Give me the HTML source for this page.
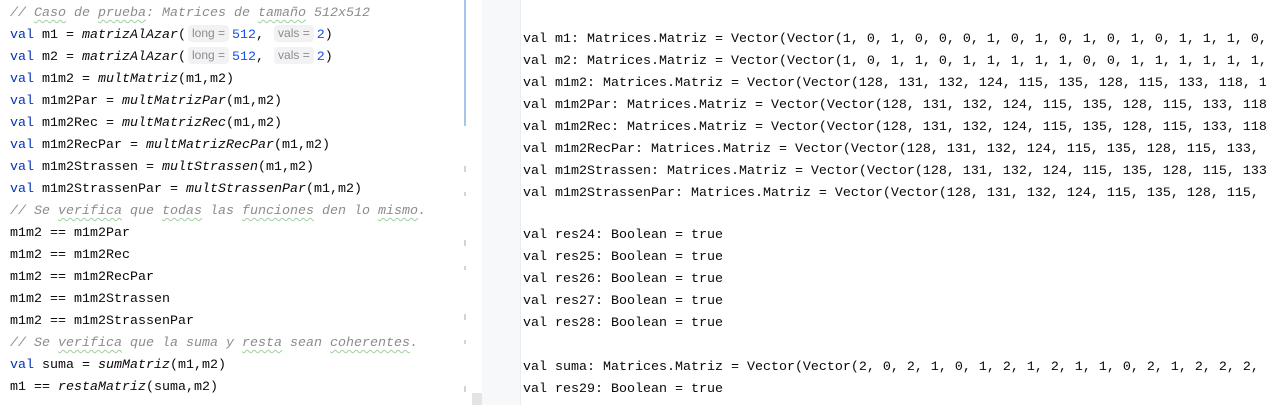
<!DOCTYPE html>
<html><head><meta charset="utf-8"><style>
body{margin:0;width:1266px;height:405px;overflow:hidden;background:#fff;font-family:"Liberation Mono",monospace;font-size:13.33px;color:#080808}
#left{position:absolute;left:0;top:0;width:482px;height:405px;background:#fff}
#gut{position:absolute;left:482px;top:0;width:38px;height:405px;background:#f7f8fa;border-right:1px solid #ebecf0}
#right{position:absolute;left:521px;top:0;width:745px;height:405px;background:#fff}
.l{position:absolute;white-space:pre;line-height:22px;height:22px}
.k{color:#0033b3}.f{font-style:italic}.n{color:#1750eb}.c{color:#8c8c8c;font-style:italic}
.h{display:inline-block;line-height:17px;font-family:"Liberation Sans",sans-serif;font-size:12px;color:#8c8c8c;background:#f2f2f4;border-radius:4px;padding:0 4px;margin:0 3px 0 2px;vertical-align:1px}
.w{text-decoration:underline wavy #9fcf9f;text-decoration-thickness:1px;text-underline-offset:3px}
.mk{position:absolute;left:464px;width:2px;height:6px;background:#d4d4d4}
</style></head><body>
<div id="left">
<div class="l" style="left:10px;top:3px"><span class="c">// <span class="w">Caso</span> de <span class="w">prueba</span>: Matrices de <span class="w">tamaño</span> 512x512</span></div>
<div class="l" style="left:10px;top:25px"><span class="k">val</span> m1 = <span class="f">matrizAlAzar</span>(<span class="h">long =</span><span class="n">512</span>, <span class="h">vals =</span><span class="n">2</span>)</div>
<div class="l" style="left:10px;top:47px"><span class="k">val</span> m2 = <span class="f">matrizAlAzar</span>(<span class="h">long =</span><span class="n">512</span>, <span class="h">vals =</span><span class="n">2</span>)</div>
<div class="l" style="left:10px;top:69px"><span class="k">val</span> m1m2 = <span class="f">multMatriz</span>(m1,m2)</div>
<div class="l" style="left:10px;top:91px"><span class="k">val</span> m1m2Par = <span class="f">multMatrizPar</span>(m1,m2)</div>
<div class="l" style="left:10px;top:113px"><span class="k">val</span> m1m2Rec = <span class="f">multMatrizRec</span>(m1,m2)</div>
<div class="l" style="left:10px;top:135px"><span class="k">val</span> m1m2RecPar = <span class="f">multMatrizRecPar</span>(m1,m2)</div>
<div class="l" style="left:10px;top:157px"><span class="k">val</span> m1m2Strassen = <span class="f">multStrassen</span>(m1,m2)</div>
<div class="l" style="left:10px;top:179px"><span class="k">val</span> m1m2StrassenPar = <span class="f">multStrassenPar</span>(m1,m2)</div>
<div class="l" style="left:10px;top:201px"><span class="c">// Se <span class="w">verifica</span> que <span class="w">todas</span> las <span class="w">funciones</span> den lo <span class="w">mismo</span>.</span></div>
<div class="l" style="left:10px;top:223px">m1m2 == m1m2Par</div>
<div class="l" style="left:10px;top:245px">m1m2 == m1m2Rec</div>
<div class="l" style="left:10px;top:267px">m1m2 == m1m2RecPar</div>
<div class="l" style="left:10px;top:289px">m1m2 == m1m2Strassen</div>
<div class="l" style="left:10px;top:311px">m1m2 == m1m2StrassenPar</div>
<div class="l" style="left:10px;top:333px"><span class="c">// Se <span class="w">verifica</span> que la suma y <span class="w">resta</span> sean <span class="w">coherentes</span>.</span></div>
<div class="l" style="left:10px;top:355px"><span class="k">val</span> suma = <span class="f">sumMatriz</span>(m1,m2)</div>
<div class="l" style="left:10px;top:377px">m1 == <span class="f">restaMatriz</span>(suma,m2)</div>
<div style="position:absolute;left:464px;top:0;width:2px;height:126px;background:#a9c4ec"></div>
<div class="mk" style="top:166px"></div><div class="mk" style="top:192px;height:4px"></div>
<div class="mk" style="top:240px"></div><div class="mk" style="top:266px;height:4px"></div>
<div class="mk" style="top:314px"></div><div class="mk" style="top:340px;height:4px"></div>
<div class="mk" style="top:386px"></div>
<div style="position:absolute;left:472px;top:393px;width:10px;height:12px;background:#e4e4e4"></div>
</div>
<div id="gut"></div>
<div id="right">
<div class="l" style="left:2px;top:29px">val m1: Matrices.Matriz = Vector(Vector(1, 0, 1, 0, 0, 0, 1, 0, 1, 0, 1, 0, 1, 0, 1, 1, 1, 0,</div>
<div class="l" style="left:2px;top:51px">val m2: Matrices.Matriz = Vector(Vector(1, 0, 1, 1, 0, 1, 1, 1, 1, 1, 0, 0, 1, 1, 1, 1, 1, 1,</div>
<div class="l" style="left:2px;top:73px">val m1m2: Matrices.Matriz = Vector(Vector(128, 131, 132, 124, 115, 135, 128, 115, 133, 118, 1</div>
<div class="l" style="left:2px;top:95px">val m1m2Par: Matrices.Matriz = Vector(Vector(128, 131, 132, 124, 115, 135, 128, 115, 133, 118</div>
<div class="l" style="left:2px;top:117px">val m1m2Rec: Matrices.Matriz = Vector(Vector(128, 131, 132, 124, 115, 135, 128, 115, 133, 118</div>
<div class="l" style="left:2px;top:139px">val m1m2RecPar: Matrices.Matriz = Vector(Vector(128, 131, 132, 124, 115, 135, 128, 115, 133,</div>
<div class="l" style="left:2px;top:161px">val m1m2Strassen: Matrices.Matriz = Vector(Vector(128, 131, 132, 124, 115, 135, 128, 115, 133</div>
<div class="l" style="left:2px;top:183px">val m1m2StrassenPar: Matrices.Matriz = Vector(Vector(128, 131, 132, 124, 115, 135, 128, 115,</div>
<div class="l" style="left:2px;top:225px">val res24: Boolean = true</div>
<div class="l" style="left:2px;top:247px">val res25: Boolean = true</div>
<div class="l" style="left:2px;top:269px">val res26: Boolean = true</div>
<div class="l" style="left:2px;top:291px">val res27: Boolean = true</div>
<div class="l" style="left:2px;top:313px">val res28: Boolean = true</div>
<div class="l" style="left:2px;top:357px">val suma: Matrices.Matriz = Vector(Vector(2, 0, 2, 1, 0, 1, 2, 1, 2, 1, 1, 0, 2, 1, 2, 2, 2,</div>
<div class="l" style="left:2px;top:379px">val res29: Boolean = true</div>
</div>
</body></html>
